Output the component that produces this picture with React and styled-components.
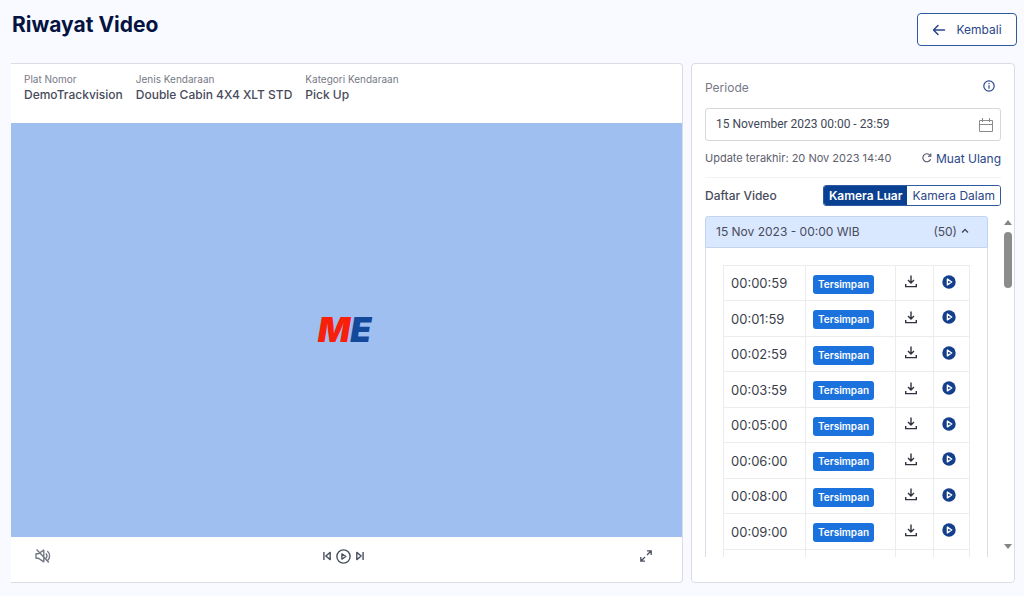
import React, { useState } from 'react';
import styled, { createGlobalStyle } from 'styled-components';

const GlobalStyle = createGlobalStyle`
  * {
    box-sizing: border-box;
  }

  body {
    margin: 0;
    background-color: #f9faff;
    color: #484b5b;
    font-family: 'Inter', 'Noto Sans', sans-serif;
  }

  button,
  input {
    font-family: inherit;
  }
`;

const Page = styled.div`
  display: flex;
  flex-direction: column;
  gap: 17px;
  height: 100vh;
  min-height: 480px;
  padding: 13px 7px 13px 11px;
`;

const Header = styled.header`
  display: flex;
  justify-content: space-between;
  align-items: flex-start;
`;

const Title = styled.h1`
  margin: 0;
  padding-left: 1px;
  font-size: 21px;
  line-height: 24px;
  font-weight: 700;
  color: #04133f;
`;

const BackButton = styled.button`
  display: flex;
  align-items: center;
  justify-content: center;
  gap: 10px;
  width: 100px;
  height: 33px;
  padding: 0;
  border: 1px solid #2f5a9f;
  border-radius: 4px;
  background-color: #fff;
  font-size: 12px;
  color: #2b4689;
  cursor: pointer;
`;

const Content = styled.main`
  display: grid;
  grid-template-columns: minmax(0, 1fr) 324px;
  gap: 8px;
  flex: 1;
  min-height: 0;
  padding-right: 2px;
`;

const Card = styled.section`
  display: flex;
  flex-direction: column;
  min-height: 0;
  border: 1px solid #d9dde3;
  border-radius: 4px;
  background-color: #fff;
`;

const PlayerCard = styled(Card)`
  border-left: none;
  border-radius: 0 4px 4px 0;
`;

const VehicleInfo = styled.dl`
  display: flex;
  gap: 13px;
  height: 59px;
  margin: 0;
  padding: 8px 13px;
`;

const Label = styled.dt`
  font-size: 10px;
  line-height: 14px;
  color: #777a86;
`;

const Value = styled.dd`
  margin: 0;
  font-size: 12px;
  line-height: 18px;
  font-weight: 500;
`;

const Screen = styled.div`
  display: flex;
  flex: 1;
  align-items: center;
  justify-content: center;
  background-color: #9ebff0;
`;

const Logo = styled.div`
  padding-right: 4px;
  font-size: 34px;
  line-height: 34px;
  font-weight: 900;
  font-style: italic;
  color: #f8200a;
`;

const LogoAccent = styled.span`
  color: #13499b;
`;

const Controls = styled.div`
  display: grid;
  grid-template-columns: 1fr auto 1fr;
  align-items: center;
  height: 45px;
  padding: 0 30px 7px 24px;
`;

const Transport = styled.div`
  display: flex;
  align-items: center;
  gap: 5px;
`;

const IconButton = styled.button`
  display: inline-flex;
  justify-self: ${(props) => props.$align || 'center'};
  padding: 0;
  border: none;
  background: none;
  color: ${(props) => props.$color || '#4b5060'};
  cursor: pointer;
`;

const SideCard = styled(Card)`
  padding: 13px 1px 25px 13px;
`;

const SideTop = styled.div`
  display: flex;
  flex-direction: column;
  padding-right: 12px;
`;

const Row = styled.div`
  display: flex;
  align-items: center;
  justify-content: space-between;
  height: ${(props) => props.$height};
`;

const FieldLabel = styled.label`
  font-size: 12px;
  color: #777a86;
`;

const InfoButton = styled(IconButton)`
  margin: 0 6px 4px 0;
`;

const DateField = styled.div`
  display: flex;
  align-items: center;
  height: 33px;
  margin-top: 10px;
  padding: 0 7px 0 10px;
  border: 1px solid #d5d8dd;
  border-radius: 3px;
  color: #8b8b8b;
`;

const DateInput = styled.input`
  flex: 1;
  min-width: 0;
  padding: 0 0 1px;
  border: none;
  outline: none;
  background: none;
  font-family: Roboto, sans-serif;
  font-size: 12px;
  color: #3f4757;
`;

const Updated = styled.span`
  font-size: 11px;
  color: #5d606e;
`;

const ReloadButton = styled.button`
  display: flex;
  align-items: center;
  gap: 4px;
  padding: 0;
  border: none;
  background: none;
  font-size: 12px;
  color: #2b4689;
  cursor: pointer;
`;

const Divider = styled.hr`
  width: 100%;
  margin: 2px 0 7px;
  border: none;
  border-top: 1px solid #f2f3f5;
`;

const ListTitle = styled.h2`
  margin: 0;
  font-size: 12px;
  font-weight: 500;
`;

const Toggle = styled.div`
  display: flex;
  height: 21px;
  border: 1px solid #2f5a9f;
  border-radius: 3px;
  overflow: hidden;
`;

const ToggleButton = styled.button`
  padding: 0 5px;
  border: none;
  background-color: ${(props) => (props.$active ? '#0a4091' : '#fff')};
  font-size: 12px;
  font-weight: ${(props) => (props.$active ? 600 : 400)};
  color: ${(props) => (props.$active ? '#fff' : '#2b4689')};
  cursor: pointer;
`;

const ListArea = styled.div`
  display: flex;
  justify-content: space-between;
  flex: 1;
  min-height: 0;
  margin-top: 10px;
`;

const Scroller = styled.div`
  width: 283px;
  overflow-y: auto;
  scrollbar-width: none;
`;

const GroupHeader = styled.button`
  display: flex;
  align-items: center;
  gap: 4px;
  width: 100%;
  height: 32px;
  padding: 0 18px 2px 10px;
  border: 1px solid #c3d4ee;
  border-radius: 3px 3px 0 0;
  background-color: #d9e7ff;
  font-size: 12px;
  color: #484b5b;
  cursor: pointer;
`;

const GroupName = styled.span`
  flex: 1;
  text-align: left;
`;

const GroupBody = styled.div`
  padding: 17px 17px 18px;
  border: 1px solid #d9dde8;
  border-top: none;
`;

const VideoTable = styled.table`
  width: 246px;
  table-layout: fixed;
  border-collapse: collapse;
`;

const VideoRow = styled.tr`
  height: 35px;

  &:nth-child(even) {
    height: 36px;
  }
`;

const Cell = styled.td`
  width: ${(props) => props.$width};
  padding: 0 0 0 ${(props) => props.$indent || '8px'};
  border: 1px solid #ebecef;
  font-size: 13px;
  line-height: 16px;
  color: #3b3e4c;
`;

const Badge = styled.span`
  display: block;
  width: 61px;
  margin-top: 2px;
  border-radius: 3px;
  background-color: #1c72dc;
  font-size: 10px;
  line-height: 19px;
  font-weight: 600;
  text-align: center;
  color: #fff;
`;

const Scrollbar = styled.div`
  display: flex;
  flex-direction: column;
  align-items: center;
  justify-content: space-between;
  width: 11px;
  padding: 4px 0 8px;
`;

const ScrollTop = styled.div`
  display: flex;
  flex-direction: column;
  align-items: center;
  gap: 7px;
`;

const Thumb = styled.div`
  width: 8px;
  height: 56px;
  border-radius: 4px;
  background-color: #8c8c8c;
`;

const Triangle = ({ down }) => (
  <svg width="8" height="5" viewBox="0 0 8 5" aria-hidden="true">
    <path d={down ? 'M0 0h8L4 5z' : 'M0 5h8L4 0z'} fill="#858585" />
  </svg>
);

const ArrowIcon = () => (
  <svg width="14" height="12" viewBox="0 0 14 12" fill="none" stroke="currentColor" strokeWidth="1.5" strokeLinecap="round" strokeLinejoin="round">
    <path d="M12.5 6H1.5M6 1.5 1.5 6 6 10.5" />
  </svg>
);

const InfoIcon = () => (
  <svg width="12" height="12" viewBox="0 0 12 12" fill="none" stroke="currentColor" strokeWidth="1.2">
    <circle cx="6" cy="6" r="5.2" />
    <path d="M6 5.3v3.4M6 3.1v1.2" />
  </svg>
);

const CalendarIcon = () => (
  <svg width="14" height="14" viewBox="0 0 14 14" fill="none" stroke="currentColor">
    <path d="M.5 2.5h13v11H.5zM.5 6.5h13M3.5 0v4M10.5 0v4" />
  </svg>
);

const ReloadIcon = () => (
  <svg width="10" height="10" viewBox="0 0 10 10" fill="none" stroke="#4b5060" strokeWidth="1.1">
    <path d="M8.6 6.2A4 4 0 1 1 8 2.3M8.8.5v2.8H6" />
  </svg>
);

const CaretIcon = () => (
  <svg width="8" height="6" viewBox="0 0 8 6" fill="none" stroke="currentColor" strokeWidth="1.4">
    <path d="M1 4.5 4 1.5l3 3" />
  </svg>
);

const DownloadIcon = () => (
  <svg width="12" height="13" viewBox="0 0 12 13" fill="none" stroke="currentColor" strokeWidth="1.4">
    <path d="M6 .5v7.3M3 5l3 3 3-3M.7 9v2.6h10.6V9" />
  </svg>
);

const PlayDotIcon = () => (
  <svg width="14" height="14" viewBox="0 0 14 14">
    <circle cx="7" cy="7" r="6.7" fill="#143f8c" />
    <path d="M5.4 4.1v5.8L9.7 7z" fill="#143f8c" stroke="#fff" strokeWidth="1.4" strokeLinejoin="round" />
  </svg>
);

const MuteIcon = () => (
  <svg width="16" height="14" viewBox="0 0 16 14" fill="none" stroke="currentColor" strokeWidth="1.4" strokeLinejoin="round">
    <path d="M1 4.7h2.6L8.8 1.2v11.6L3.6 9.3H1zM10.8 4.6a3.4 3.4 0 0 1 0 4.8M12.3 2a6.6 6.6 0 0 1 0 10M1.6.6l12.2 12.8" />
  </svg>
);

const PreviousIcon = () => (
  <svg width="8" height="10" viewBox="0 0 8 10" fill="none" stroke="currentColor" strokeWidth="1.4" strokeLinejoin="round">
    <path d="M.9 1v8M7.2 1.4v7.2L2.8 5z" />
  </svg>
);

const NextIcon = () => (
  <svg width="8" height="10" viewBox="0 0 8 10" fill="none" stroke="currentColor" strokeWidth="1.4" strokeLinejoin="round">
    <path d="M7.1 1v8M.8 1.4v7.2L5.2 5z" />
  </svg>
);

const PlayIcon = () => (
  <svg width="15" height="15" viewBox="0 0 15 15" fill="none" stroke="currentColor" strokeWidth="1.4" strokeLinejoin="round">
    <circle cx="7.5" cy="7.5" r="6.6" />
    <path d="M5.9 4.9v5.2l4-2.6z" />
  </svg>
);

const ExpandIcon = () => (
  <svg width="12" height="12" viewBox="0 0 12 12" fill="none" stroke="currentColor" strokeWidth="1.3">
    <path d="M7 .8h4.2V5M11 1 7 5M5 11.2H.8V7M1 11l4-4" />
  </svg>
);

const vehicle = [
  { label: 'Plat Nomor', value: 'DemoTrackvision' },
  { label: 'Jenis Kendaraan', value: 'Double Cabin 4X4 XLT STD' },
  { label: 'Kategori Kendaraan', value: 'Pick Up' },
];

const videos = [
  '00:00:59',
  '00:01:59',
  '00:02:59',
  '00:03:59',
  '00:05:00',
  '00:06:00',
  '00:08:00',
  '00:09:00',
];

const App = () => {
  const [camera, setCamera] = useState('Luar');
  const [open, setOpen] = useState(true);
  const [period, setPeriod] = useState('15 November 2023 00:00 - 23:59');

  return (
    <>
      <GlobalStyle />
      <Page>
        <Header>
          <Title>Riwayat Video</Title>
          <BackButton type="button">
            <ArrowIcon />
            Kembali
          </BackButton>
        </Header>
        <Content>
          <PlayerCard>
            <VehicleInfo>
              {vehicle.map((item) => (
                <div key={item.label}>
                  <Label>{item.label}</Label>
                  <Value>{item.value}</Value>
                </div>
              ))}
            </VehicleInfo>
            <Screen>
              <Logo>
                M<LogoAccent>E</LogoAccent>
              </Logo>
            </Screen>
            <Controls>
              <IconButton type="button" aria-label="Suara" $align="start" $color="#747985">
                <MuteIcon />
              </IconButton>
              <Transport>
                <IconButton type="button" aria-label="Sebelumnya">
                  <PreviousIcon />
                </IconButton>
                <IconButton type="button" aria-label="Putar">
                  <PlayIcon />
                </IconButton>
                <IconButton type="button" aria-label="Berikutnya">
                  <NextIcon />
                </IconButton>
              </Transport>
              <IconButton type="button" aria-label="Layar penuh" $align="end">
                <ExpandIcon />
              </IconButton>
            </Controls>
          </PlayerCard>
          <SideCard>
            <SideTop>
              <Row $height="21px">
                <FieldLabel htmlFor="period">Periode</FieldLabel>
                <InfoButton type="button" aria-label="Info" $color="#2b4689">
                  <InfoIcon />
                </InfoButton>
              </Row>
              <DateField>
                <DateInput id="period" value={period} onChange={(e) => setPeriod(e.target.value)} />
                <CalendarIcon />
              </DateField>
              <Row $height="34px">
                <Updated>Update terakhir: 20 Nov 2023 14:40</Updated>
                <ReloadButton type="button">
                  <ReloadIcon />
                  Muat Ulang
                </ReloadButton>
              </Row>
              <Divider />
              <Row $height="21px">
                <ListTitle>Daftar Video</ListTitle>
                <Toggle>
                  {['Luar', 'Dalam'].map((name) => (
                    <ToggleButton key={name} type="button" $active={camera === name} onClick={() => setCamera(name)}>
                      Kamera {name}
                    </ToggleButton>
                  ))}
                </Toggle>
              </Row>
            </SideTop>
            <ListArea>
              <Scroller>
                <GroupHeader type="button" aria-expanded={open} onClick={() => setOpen(!open)}>
                  <GroupName>15 Nov 2023 - 00:00 WIB</GroupName>
                  (50)
                  <CaretIcon />
                </GroupHeader>
                {open && (
                  <GroupBody>
                    <VideoTable>
                      <tbody>
                        {videos.map((time) => (
                          <VideoRow key={time}>
                            <Cell $width="82px" $indent="7px">{time}</Cell>
                            <Cell $width="90px" $indent="7px">
                              <Badge>Tersimpan</Badge>
                            </Cell>
                            <Cell $width="38px" $indent="9px">
                              <IconButton type="button" aria-label={`Unduh ${time}`} $color="#30333f">
                                <DownloadIcon />
                              </IconButton>
                            </Cell>
                            <Cell $width="36px">
                              <IconButton type="button" aria-label={`Putar ${time}`}>
                                <PlayDotIcon />
                              </IconButton>
                            </Cell>
                          </VideoRow>
                        ))}
                        <VideoRow>
                          <Cell />
                          <Cell />
                          <Cell />
                          <Cell />
                        </VideoRow>
                      </tbody>
                    </VideoTable>
                  </GroupBody>
                )}
              </Scroller>
              <Scrollbar aria-hidden="true">
                <ScrollTop>
                  <Triangle />
                  <Thumb />
                </ScrollTop>
                <Triangle down />
              </Scrollbar>
            </ListArea>
          </SideCard>
        </Content>
      </Page>
    </>
  );
};

export default App;
